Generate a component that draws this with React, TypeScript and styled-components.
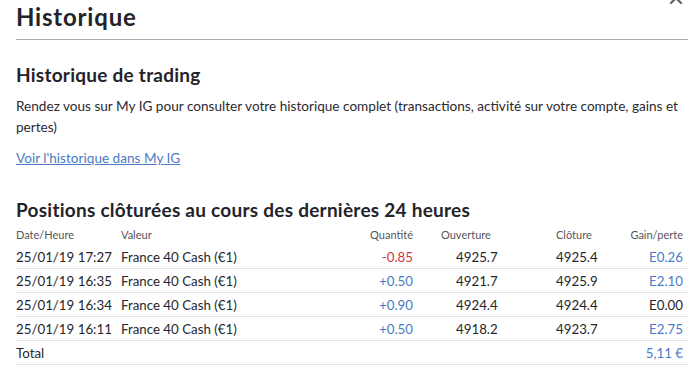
import React, { FC } from "react";
import styled, { createGlobalStyle } from "styled-components";

const GlobalStyle = createGlobalStyle`
  body {
    margin: 0;
    background: #ffffff;
    font-family: Lato, "Open Sans", sans-serif;
    color: #26262c;
  }
`;

type Trade = {
  date: string;
  name: string;
  qty: string;
  open: string;
  close: string;
  pnl: string;
};

const trades: Trade[] = [
  { date: "25/01/19 17:27", name: "France 40 Cash (€1)", qty: "-0.85", open: "4925.7", close: "4925.4", pnl: "E0.26" },
  { date: "25/01/19 16:35", name: "France 40 Cash (€1)", qty: "+0.50", open: "4921.7", close: "4925.9", pnl: "E2.10" },
  { date: "25/01/19 16:34", name: "France 40 Cash (€1)", qty: "+0.90", open: "4924.4", close: "4924.4", pnl: "E0.00" },
  { date: "25/01/19 16:11", name: "France 40 Cash (€1)", qty: "+0.50", open: "4918.2", close: "4923.7", pnl: "E2.75" },
];

const App: FC = () => {
  return (
    <>
      <GlobalStyle />
      <Panel>
        <CloseButton aria-label="Fermer">
          <svg width="14" height="14" viewBox="0 0 14 14">
            <path d="M2 2 L12 12 M12 2 L2 12" stroke="#6b6b73" strokeWidth="2.4" strokeLinecap="round" />
          </svg>
        </CloseButton>
        <Title>Historique</Title>
        <Divider />
        <Section>
          <SubTitle>Historique de trading</SubTitle>
          <Text>
            Rendez vous sur My IG pour consulter votre historique complet (transactions, activité sur votre compte, gains et
            pertes)
          </Text>
          <MoreLink href="#">Voir l'historique dans My IG</MoreLink>
        </Section>
        <Section>
          <PositionsTitle>Positions clôturées au cours des dernières 24 heures</PositionsTitle>
          <Grid>
            <HeadRow>
              <Cell>Date/Heure</Cell>
              <Cell>Valeur</Cell>
              <Cell $align="right">Quantité</Cell>
              <Cell $pad={28}>Ouverture</Cell>
              <Cell>Clôture</Cell>
              <Cell $align="right" $padR={5}>Gain/perte</Cell>
            </HeadRow>
            {trades.map((t) => (
              <Row key={t.date}>
                <Cell>{t.date}</Cell>
                <Cell>{t.name}</Cell>
                <Cell $align="right" $tone={t.qty.startsWith("-") ? "red" : "blue"}>
                  {t.qty}
                </Cell>
                <Cell $pad={43}>{t.open}</Cell>
                <Cell>{t.close}</Cell>
                <Cell $align="right" $padR={5} $tone={t.pnl === "E0.00" ? undefined : "blue"}>
                  {t.pnl}
                </Cell>
              </Row>
            ))}
            <Row>
              <Cell>Total</Cell>
              <Cell />
              <Cell />
              <Cell />
              <Cell />
              <Cell $align="right" $padR={5} $tone="blue">
                5,11 €
              </Cell>
            </Row>
          </Grid>
        </Section>
      </Panel>
    </>
  );
};

const Panel = styled.div`
  position: relative;
  width: 688px;
  height: 379px;
  overflow: hidden;
  padding-left: 16px;
  box-sizing: border-box;
`;

const CloseButton = styled.button`
  position: absolute;
  top: -9px;
  right: 5px;
  border: none;
  background: none;
  padding: 0;
  line-height: 0;
`;

const Title = styled.h1`
  margin: 0;
  padding-top: 2px;
  font-size: 24px;
  font-weight: 700;
  letter-spacing: 0.8px;
  line-height: 30px;
  color: #23232a;
`;

const Divider = styled.hr`
  margin: 7px 0 0;
  border: none;
  border-top: 1px solid #a9a9b0;
`;

const Section = styled.section`
  display: flex;
  flex-direction: column;
`;

const SubTitle = styled.h2`
  margin: 23px 0 0;
  font-size: 19px;
  font-weight: 700;
  letter-spacing: 0.25px;
  line-height: 24px;
  color: #23232a;
`;

const Text = styled.p`
  margin: 9px 0 0;
  padding-right: 8px;
  font-size: 13.6px;
  line-height: 21px;
  color: #2b2b31;
`;

const MoreLink = styled.a`
  align-self: flex-start;
  margin-top: 10px;
  font-size: 13.6px;
  line-height: 20px;
  color: #4a7bc4;
  text-decoration: underline;
`;

const PositionsTitle = styled.h2`
  margin: 30px 0 0;
  font-size: 19px;
  font-weight: 700;
  letter-spacing: 0.25px;
  line-height: 24px;
  color: #23232a;
`;

const Grid = styled.div`
  display: flex;
  flex-direction: column;
  margin-top: 2px;
`;

const Row = styled.div`
  display: grid;
  grid-template-columns: 105px 200px 92px 143px 64px 68px;
  height: 24px;
  align-items: center;
  border-bottom: 1px solid #e4e4e6;
  box-sizing: border-box;
  font-size: 13.3px;
`;

const HeadRow = styled(Row)`
  height: 21px;
  border-bottom: none;
  font-size: 11px;
  color: #55555c;
`;

const Cell = styled.div<{ $align?: "left" | "right"; $pad?: number; $padR?: number; $tone?: "red" | "blue" }>`
  text-align: ${(p) => p.$align || "left"};
  padding-left: ${(p) => p.$pad || 0}px;
  padding-right: ${(p) => p.$padR || 0}px;
  white-space: nowrap;
  color: ${(p) => (p.$tone === "red" ? "#d3343f" : p.$tone === "blue" ? "#4a7bc4" : "inherit")};
`;

export default App;
